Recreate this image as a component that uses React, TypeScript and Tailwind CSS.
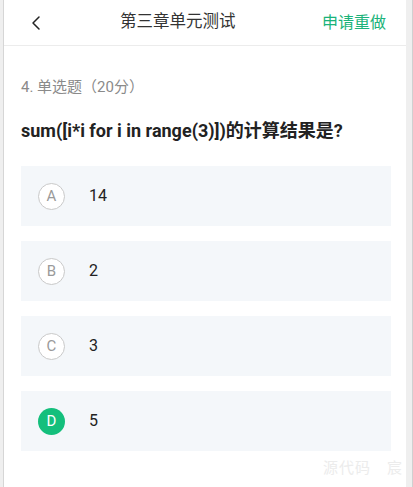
import { ChevronLeft } from "lucide-react";

const options = [
  { key: "A", text: "14", picked: false },
  { key: "B", text: "2", picked: false },
  { key: "C", text: "3", picked: false },
  { key: "D", text: "5", picked: true },
];

export default function App() {
  return (
    <div
      className="flex h-[487px] w-[413px] overflow-hidden bg-[#ececec]"
      style={{ fontFamily: "Roboto, 'Noto Sans CJK SC', sans-serif" }}
    >
      <div className="w-[4px] border-r border-[#d6d6d6] bg-[#efefef]" />
      <div className="relative flex w-[402px] flex-col bg-white">
        <header className="flex h-[46px] items-center border-b border-[#ececec] px-[20px]">
          <ChevronLeft className="h-[24px] w-[24px] text-[#222]" strokeWidth={1.5} />
          <div className="flex-1 pl-[72px] text-[16.5px] text-[#333]">第三章单元测试</div>
          <div className="text-[16px] text-[#1ab37a]">申请重做</div>
        </header>

        <div className="px-[17px] pt-[31px]">
          <div className="text-[15px] leading-[20px] text-[#8a8a8a]">4. 单选题（20分）</div>
          <div className="mt-[22px] text-[18px] font-bold leading-[24px] text-[#222]">
            sum([i*i for i in range(3)])的计算结果是?
          </div>

          <div className="mt-[23px] flex flex-col gap-[15px]">
            {options.map((o) => (
              <div key={o.key} className="flex h-[60px] w-[370px] items-center bg-[#f4f7fa] pl-[17px]">
                {o.picked ? (
                  <span className="flex h-[27px] w-[27px] items-center justify-center rounded-full bg-[#14bf7c] text-[15px] text-white">
                    {o.key}
                  </span>
                ) : (
                  <span className="flex h-[27px] w-[27px] items-center justify-center rounded-full border border-[#c9c9c9] bg-white text-[15px] text-[#9a9a9a]">
                    {o.key}
                  </span>
                )}
                <span className="ml-[24px] text-[16px] text-[#222]">{o.text}</span>
              </div>
            ))}
          </div>
        </div>

        <div className="absolute bottom-[8px] right-[3px] text-[15px] tracking-[1px] text-[#ececec]">
          源代码<span className="ml-[16px]">宸</span>
        </div>
      </div>
      <div className="w-[7px] border-r border-[#d0d0d0] bg-[#efefef]" />
    </div>
  );
}
